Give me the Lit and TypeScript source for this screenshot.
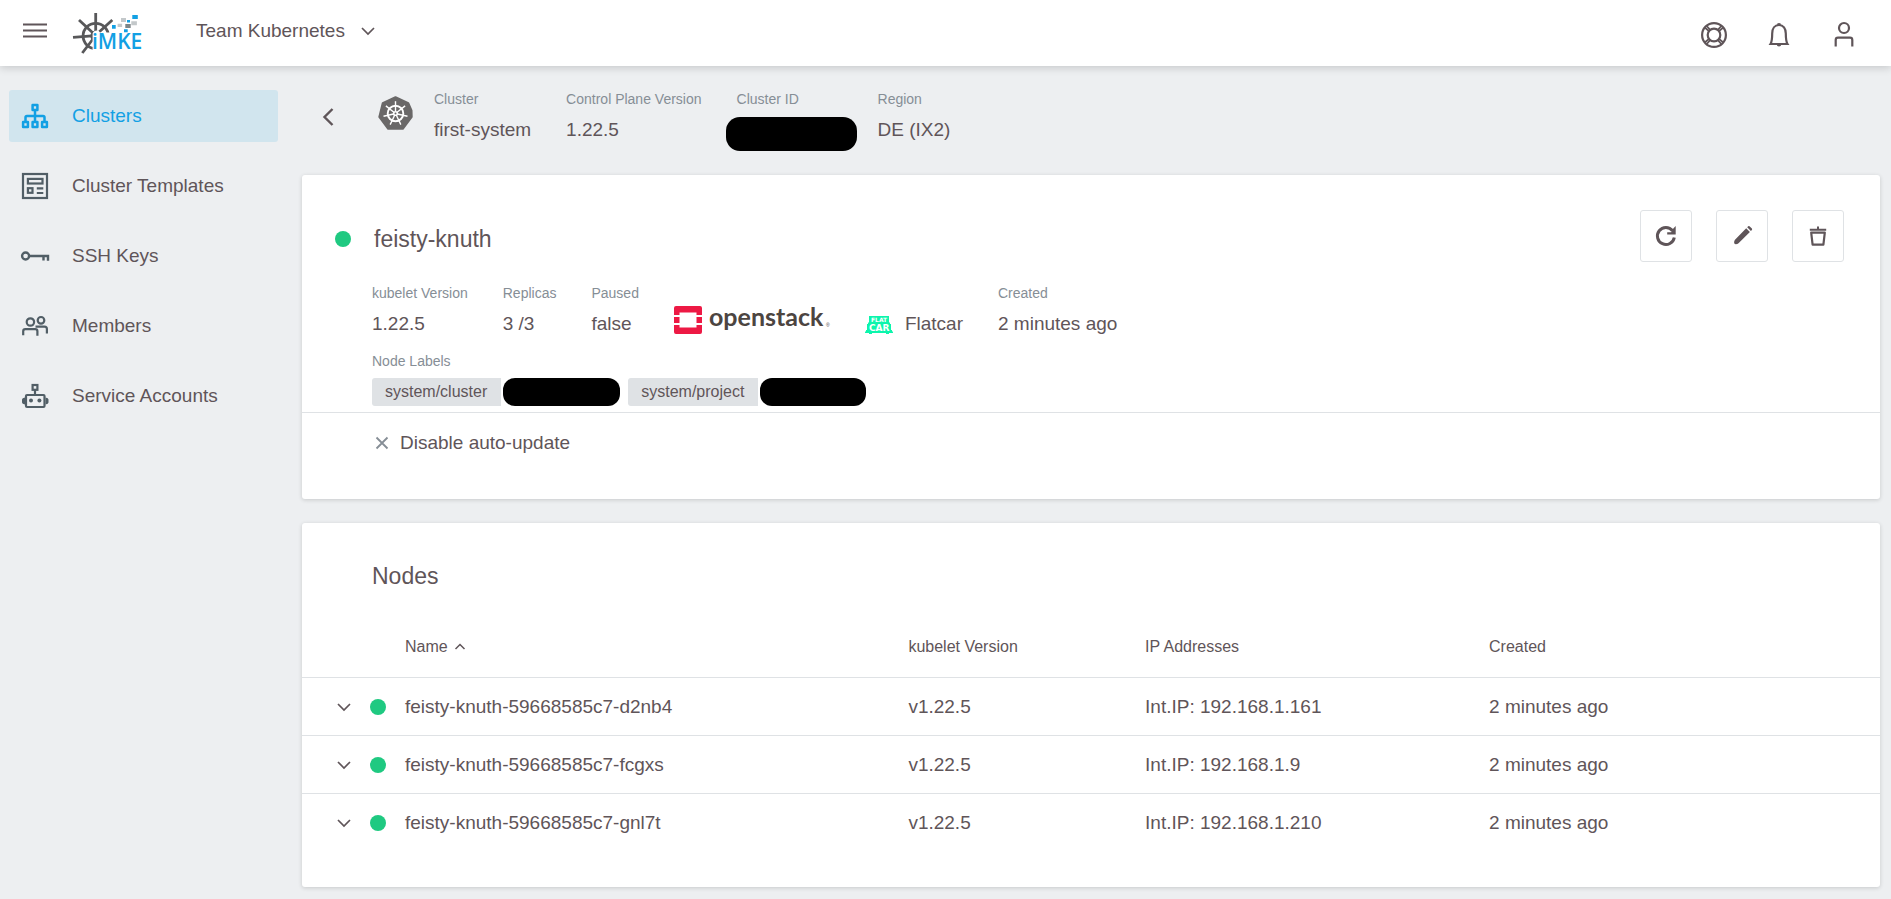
import { LitElement, html, svg, css } from "lit";
import { customElement, property } from "lit/decorators.js";
import { classMap } from "lit/directives/class-map.js";

const icons: Record<string, unknown> = {
  clusters: svg`<g fill="none" stroke="currentColor" stroke-width="2.500" stroke-linejoin="round">
    <rect x="10.600" y="2.100" width="4.800" height="4.800"/><rect x="1.100" y="19.100" width="4.800" height="4.800"/>
    <rect x="10.600" y="19.100" width="4.800" height="4.800"/><rect x="20.100" y="19.100" width="4.800" height="4.800"/>
    <path d="M13 7v12M3.500 19v-4.500q0-1.500 1.500-1.500h16q1.500 0 1.500 1.500V19"/></g>`,
  templates: svg`<g fill="none" stroke="currentColor" stroke-width="2.200">
    <rect x="1" y="1" width="24" height="24"/><rect x="5.900" y="5.900" width="14.600" height="4.600"/>
    <rect x="5.900" y="15.200" width="4.600" height="4.600"/><path d="M14.800 15.300h6.500M14.800 20h6.500"/></g>`,
  key: svg`<g fill="none" stroke="currentColor" stroke-width="2.400">
    <circle cx="3.600" cy="13" r="3.500"/><path d="M7 13h19v4.800M21.500 13v4.500"/></g>`,
  members: svg`<g fill="none" stroke="currentColor" stroke-width="2.200">
    <circle cx="8.400" cy="9" r="3.700"/><circle cx="19" cy="7.300" r="3.300"/>
    <path d="M1.200 22.300v-4q0-2.200 2.200-2.200h9.800q2.200 0 2.200 2.200v4.500M13.500 13.700h9q2.400 0 2.400 2.400v4.300"/></g>`,
  robot: svg`<g fill="none" stroke="currentColor" stroke-width="2.200">
    <rect x="10.600" y="2" width="4.800" height="4.800"/><path d="M13 7v5"/>
    <rect x="4" y="12" width="18.500" height="12" rx="1"/></g>
    <g fill="currentColor"><circle cx="9" cy="17.400" r="2"/><circle cx="17.400" cy="17.400" r="2"/>
    <path d="M3 14.500q-3 .500-3 2v3q0 1.500 3 2zM23.500 14.500q3 .500 3 2v3q0 1.500-3 2z"/></g>`,
  help: svg`<g fill="none" stroke="currentColor" stroke-width="2.200">
    <circle cx="13" cy="13" r="11.900"/><circle cx="13" cy="13" r="6.300"/>
    <path stroke-width="1.700" d="M3.800 5.500l4.100 3.700M5.500 3.800l3.700 4.100M22.200 5.500l-4.100 3.700M20.500 3.800l-3.700 4.100M3.800 20.500l4.100-3.700M5.500 22.200l3.700-4.100M22.200 20.500l-4.100-3.700M20.500 22.200l-3.700-4.100"/></g>`,
  bell: svg`<path fill="none" stroke="currentColor" stroke-width="2.200" d="M4.500 22h17c-1.200-2-1.700-4-1.700-10.500 0-5-2.500-8.500-6.800-8.500s-6.800 3.500-6.800 8.500C6.200 18 5.700 20 4.500 22z"/>
    <path fill="currentColor" d="M10.800 2.800q0-1.800 2.200-1.800t2.200 1.800zM10.800 22.500h4.400q0 2-2.200 2t-2.200-2z"/>`,
  user: svg`<g fill="none" stroke="currentColor" stroke-width="2.200">
    <circle cx="13" cy="6" r="5"/><path d="M4.700 24.500v-6.500q0-2.300 2.300-2.300h12q2.300 0 2.300 2.300v6.500"/></g>`,
  refresh: svg`<path fill="none" stroke="currentColor" stroke-width="3" d="M21.300 14.500a8.500 8.500 0 1 1-1.700-6.800"/>
    <path fill="currentColor" d="M20.300 5.500l2.400-2.500v8.500h-8.500v-2.300h4z"/>`,
  edit: svg`<path fill="currentColor" d="M17.200 5.200l3.700 3.700L9.500 20.300q-1 .900-2.800.900-1.600 0-1.600-1.600 0-1.800.900-2.800zM18.200 4.200l1-1q.700-.500 1.300 0l2.400 2.400q.500.600 0 1.300l-1 1z"/>`,
  trash: svg`<path fill="none" stroke="currentColor" stroke-width="2.200" stroke-linejoin="round" d="M6.200 9.600h13.600l-1.400 12H7.600z"/>
    <path fill="currentColor" d="M4.800 5.700h7.200V3.500h2v2.200h7.200v2H4.800z"/>`,
};

const icon = (name: string) =>
  html`<svg class="icon" width="26" height="26" viewBox="0 0 26 26" overflow="visible" aria-hidden="true">${icons[name]}</svg>`;

const chevron = html`<svg width="14" height="8" viewBox="0 0 14 8" aria-hidden="true">
  <path d="M1 1l6 6 6-6" fill="none" stroke="currentColor" stroke-width="1.700"/></svg>`;

const shared = css`
  :host { box-sizing: border-box; }
  * { box-sizing: border-box; }
  svg { display: block; flex: none; overflow: visible; }
  button { border: 0; background: none; padding: 0; margin: 0; color: inherit; font: inherit; cursor: pointer; }
  a { color: inherit; text-decoration: none; }
  h1, h2, ul { margin: 0; padding: 0; font-weight: 400; }
`;

@customElement("app-header")
export class AppHeader extends LitElement {
  static styles = [shared, css`
    :host {
      display: flex; justify-content: space-between; height: 66px;
      background: #fff; box-shadow: 0 2px 8px rgba(0, 0, 0, .16); z-index: 1;
    }
    .left { display: flex; align-items: center; padding: 0 0 5px 23px; }
    .logo { margin: 5px 53px 0 26px; }
    .brand { font: 600 21px "Open Sans", sans-serif; fill: #12a0e4; }
    .project { display: flex; align-items: center; gap: 16px; line-height: 22px; }
    .right { display: flex; align-items: center; gap: 39px; padding: 4px 34px 0 0; }
  `];

  render() {
    return html`
      <div class="left">
        <button aria-label="Toggle menu">
          <svg width="24" height="15" viewBox="0 0 24 15"><path d="M0 1.500h24M0 7.500h24M0 13.500h24" stroke="currentColor" stroke-width="2.200"/></svg>
        </button>
        <a href="#" class="logo" aria-label="iMKE">
          <svg width="70" height="42" viewBox="73 12 70 42">
            <g fill="none" stroke="#58585a" stroke-width="2.800">
              <circle cx="95.700" cy="36" r="12.600"/><circle cx="95.700" cy="36" r="4"/>
              <path d="M95.700 13v19M79 20l14 13M112.300 20L98 33M73 37.300l19-1.500M82.300 53L93 39"/>
            </g>
            <path fill="#fff" d="M92.600 33.500q1-3 4.400-3 2 0 3 2h14v18H92.600z"/>
            <text class="brand" x="92" y="49">iMKE</text>
            <g fill="#12a0e4"><path d="M132.300 15h5.500v4h-5.500zM127 20h3v2.400h-3zM112 25h3.700v3.700H112zM124 29.300h3.700v3H124z"/></g>
            <g fill="#c3c8ca"><path d="M121 18h5v4h-5zM131.300 21.300h5.600v4h-5.600zM117.600 23.700h4.500v3.400h-4.500z"/></g>
            <path fill="#7c8588" d="M125.300 24h5.400v4h-5.400z"/>
          </svg>
        </a>
        <button class="project">Team Kubernetes ${chevron}</button>
      </div>
      <div class="right">
        <button aria-label="Help">${icon("help")}</button>
        <button aria-label="Notifications">${icon("bell")}</button>
        <button aria-label="Account">${icon("user")}</button>
      </div>`;
  }
}

@customElement("app-sidebar")
export class AppSidebar extends LitElement {
  static styles = [shared, css`
    :host { display: block; width: 302px; flex: none; padding: 24px 24px 0 9px; }
    nav { display: flex; flex-direction: column; gap: 18px; }
    .item { display: flex; align-items: center; gap: 24px; height: 52px; padding-left: 13px; border-radius: 3px; }
    .item svg { color: #515e66; }
    .active { background: #d1e5ee; color: #12a0e4; }
    .active svg { color: #12a0e4; }
  `];

  private items = [
    ["Clusters", "clusters"],
    ["Cluster Templates", "templates"],
    ["SSH Keys", "key"],
    ["Members", "members"],
    ["Service Accounts", "robot"],
  ];

  render() {
    return html`<nav>${this.items.map(([label, glyph], i) => html`
      <a href="#" class=${classMap({ item: true, active: i === 0 })}>${icon(glyph)}<span>${label}</span></a>`)}</nav>`;
  }
}

@customElement("app-property")
export class AppProperty extends LitElement {
  @property() label = "";

  static styles = css`
    :host { display: flex; flex-direction: column; gap: 11px; }
    .label { font-size: 14px; line-height: 17px; color: #868e96; }
    .value { line-height: 22px; min-height: 22px; }
  `;

  render() {
    return html`<div class="label">${this.label}</div><div class="value"><slot></slot></div>`;
  }
}

@customElement("app-root")
export class AppRoot extends LitElement {
  static styles = [shared, css`
    :host {
      display: flex; flex-direction: column; min-height: 100vh;
      background: #edeff1; color: #5f5559;
      font: 19px/22px "Liberation Sans", Arial, sans-serif;
    }
    .body { display: flex; flex: 1; }
    main { flex: 1; min-width: 0; padding: 0 11px 10px 0; }

    .crumbs { display: flex; align-items: flex-start; height: 109px; padding: 25px 0 0 20px; }
    .back { margin: 16px 44px 0 0; }
    .k8s { margin: 5px 21px 0 0; }
    .props { display: flex; align-items: flex-end; gap: 35px; }
    .hidden-id { position: relative; width: 106px; height: 22px; }
    .hidden-id::after { content: ""; position: absolute; inset: -2px -14px -10px -11px; border-radius: 14px; background: #000; }

    .card { background: #fff; border-radius: 3px; box-shadow: 0 1px 4px rgba(0, 0, 0, .16); }
    .card + .card { margin-top: 24px; }
    .top { display: flex; justify-content: space-between; padding: 35px 36px 0 33px; }
    .title { display: flex; align-items: center; gap: 23px; padding-top: 6px; }
    h1, h2 { font-size: 23px; line-height: 27px; }
    .dot { display: block; width: 16px; height: 16px; border-radius: 50%; background: #1fc981; }
    .actions { display: flex; gap: 24px; }
    .action { display: grid; place-items: center; width: 52px; height: 52px; border: 1px solid #dfe2e5; border-radius: 3px; }

    .details { padding: 23px 36px 6px 70px; border-bottom: 1px solid #dfe2e5; }
    .wordmark { font: 700 25px Lato, sans-serif; fill: #4c4541; }
    .mark { font: 5px "Liberation Sans", sans-serif; fill: #4c4541; }
    .os { display: flex; align-items: center; gap: 12px; }
    .flat { font: 700 6px "DejaVu Sans", sans-serif; fill: #fff; }
    .car { font: 700 9px "DejaVu Sans", sans-serif; fill: #fff; }
    .label { margin-top: 18px; font-size: 14px; line-height: 17px; color: #868e96; }
    .chips { display: flex; gap: 8px; margin-top: 8px; list-style: none; }
    .chip { display: flex; gap: 2px; font-size: 16px; line-height: 28px; }
    .chip-key { padding: 0 14px 0 13px; border-radius: 3px 0 0 3px; background: #dfe2e5; }
    .chip-value { width: 117px; border-radius: 12px; background: #000; }
    .chip + .chip .chip-value { width: 106px; }
    .update { display: flex; align-items: center; gap: 11px; padding: 19px 36px 45px 73px; }
    .update svg { color: #868e96; }

    .nodes { padding: 40px 0 36px; }
    h2 { padding-left: 70px; }
    table { width: 100%; margin-top: 27px; border-spacing: 0; table-layout: fixed; }
    th, td { padding: 0; text-align: left; font-weight: 400; }
    th { height: 60px; font-size: 16px; }
    td { height: 58px; border-top: 1px solid #dfe2e5; }
    .c-state { width: 103px; }
    .c-name { width: 31.9%; }
    .c-version { width: 15%; }
    .c-ip { width: 21.8%; }
    .state { display: flex; align-items: center; gap: 19px; padding-left: 35px; }
    .sort { display: flex; align-items: center; gap: 6px; }
  `];

  private nodes = [
    ["feisty-knuth-59668585c7-d2nb4", "192.168.1.161"],
    ["feisty-knuth-59668585c7-fcgxs", "192.168.1.9"],
    ["feisty-knuth-59668585c7-gnl7t", "192.168.1.210"],
  ];

  private renderCrumbs() {
    return html`<div class="crumbs">
      <button class="back" aria-label="Back">
        <svg width="12" height="20" viewBox="0 0 12 20"><path d="M10.500 2L2.500 10l8 8" fill="none" stroke="currentColor" stroke-width="2.400"/></svg>
      </button>
      <svg class="k8s" width="35" height="35" viewBox="-17.500 -17.500 35 35" aria-hidden="true">
        <path fill="#6a6868" stroke="#6a6868" stroke-width="2" stroke-linejoin="round" d="M0-16.300L12.800-10.300 16-3.200 16.200 3.500 7.300 15.300H-7.300L-16.200 3.500-12.800-10.300z"/>
        <g stroke="#fff" fill="none"><circle r="7.800" stroke-width="1.900"/>
          ${[0, 1, 2, 3, 4, 5, 6].map((n) => svg`<path stroke-width="1.400" transform="rotate(${(n * 360) / 7})" d="M0-2v-10.300"/>`)}
        </g>
        <circle r="2.600" fill="#fff"/><circle r="1" fill="#6a6868"/>
      </svg>
      <div class="props">
        <app-property label="Cluster">first-system</app-property>
        <app-property label="Control Plane Version">1.22.5</app-property>
        <app-property label="Cluster ID"><div class="hidden-id"></div></app-property>
        <app-property label="Region">DE (IX2)</app-property>
      </div>
    </div>`;
  }

  private renderDeployment() {
    return html`<section class="card">
      <div class="top">
        <div class="title"><span class="dot"></span><h1>feisty-knuth</h1></div>
        <div class="actions">
          <button class="action" aria-label="Restart">${icon("refresh")}</button>
          <button class="action" aria-label="Edit">${icon("edit")}</button>
          <button class="action" aria-label="Delete">${icon("trash")}</button>
        </div>
      </div>
      <div class="details">
        <div class="props">
          <app-property label="kubelet Version">1.22.5</app-property>
          <app-property label="Replicas">3 /3</app-property>
          <app-property label="Paused">false</app-property>
          <svg width="156" height="29" viewBox="0 0 156 29" role="img" aria-label="openstack">
            <path fill="#ed1944" d="M2 0h24a2 2 0 0 1 2 2v7h-5.500V6.500h-17V9H0V2a2 2 0 0 1 2-2zM0 11h5.500v6H0zM22.500 11H28v6h-5.500zM0 19h5.500v2.500h17V19H28v7a2 2 0 0 1-2 2H2a2 2 0 0 1-2-2z"/>
            <text class="wordmark" x="35" y="20">openstack</text>
            <text class="mark" x="152" y="21">®</text>
          </svg>
          <div class="os">
            <svg width="28" height="20" viewBox="0 -2 28 20" aria-hidden="true">
              <path fill="#0cf5ac" d="M4 0h20v6.500h1v1.500h1v6h1v1.500h1V17h-4v1h-3v-1H7v1H4v-1H0v-1.500h1V14h1V8h1V6.500h1z"/>
              <text class="flat" x="6" y="5.700">FLAT</text>
              <text class="car" x="4" y="14.500">CAR</text>
            </svg>
            <span>Flatcar</span>
          </div>
          <app-property label="Created">2 minutes ago</app-property>
        </div>
        <div class="label">Node Labels</div>
        <ul class="chips">
          <li class="chip"><span class="chip-key">system/cluster</span><span class="chip-value"></span></li>
          <li class="chip"><span class="chip-key">system/project</span><span class="chip-value"></span></li>
        </ul>
      </div>
      <div class="update">
        <svg width="14" height="14" viewBox="0 0 14 14" aria-hidden="true"><path d="M1.500 1.500l11 11M12.500 1.500l-11 11" stroke="currentColor" stroke-width="1.800"/></svg>
        <span>Disable auto-update</span>
      </div>
    </section>`;
  }

  private renderNodes() {
    return html`<section class="card nodes">
      <h2>Nodes</h2>
      <table>
        <colgroup><col class="c-state"><col class="c-name"><col class="c-version"><col class="c-ip"><col></colgroup>
        <thead><tr>
          <th></th>
          <th aria-sort="ascending"><button class="sort">Name
            <svg width="12" height="8" viewBox="0 0 12 8" aria-hidden="true"><path d="M1.500 6l4.500-4.500L10.500 6" fill="none" stroke="currentColor" stroke-width="1.500"/></svg>
          </button></th>
          <th>kubelet Version</th><th>IP Addresses</th><th>Created</th>
        </tr></thead>
        <tbody>${this.nodes.map(([name, ip]) => html`<tr>
          <td><div class="state"><button aria-label="Expand ${name}">${chevron}</button><span class="dot"></span></div></td>
          <td>${name}</td><td>v1.22.5</td><td>Int.IP: ${ip}</td><td>2 minutes ago</td>
        </tr>`)}</tbody>
      </table>
    </section>`;
  }

  render() {
    return html`
      <app-header></app-header>
      <div class="body">
        <app-sidebar></app-sidebar>
        <main>${this.renderCrumbs()}${this.renderDeployment()}${this.renderNodes()}</main>
      </div>`;
  }
}
